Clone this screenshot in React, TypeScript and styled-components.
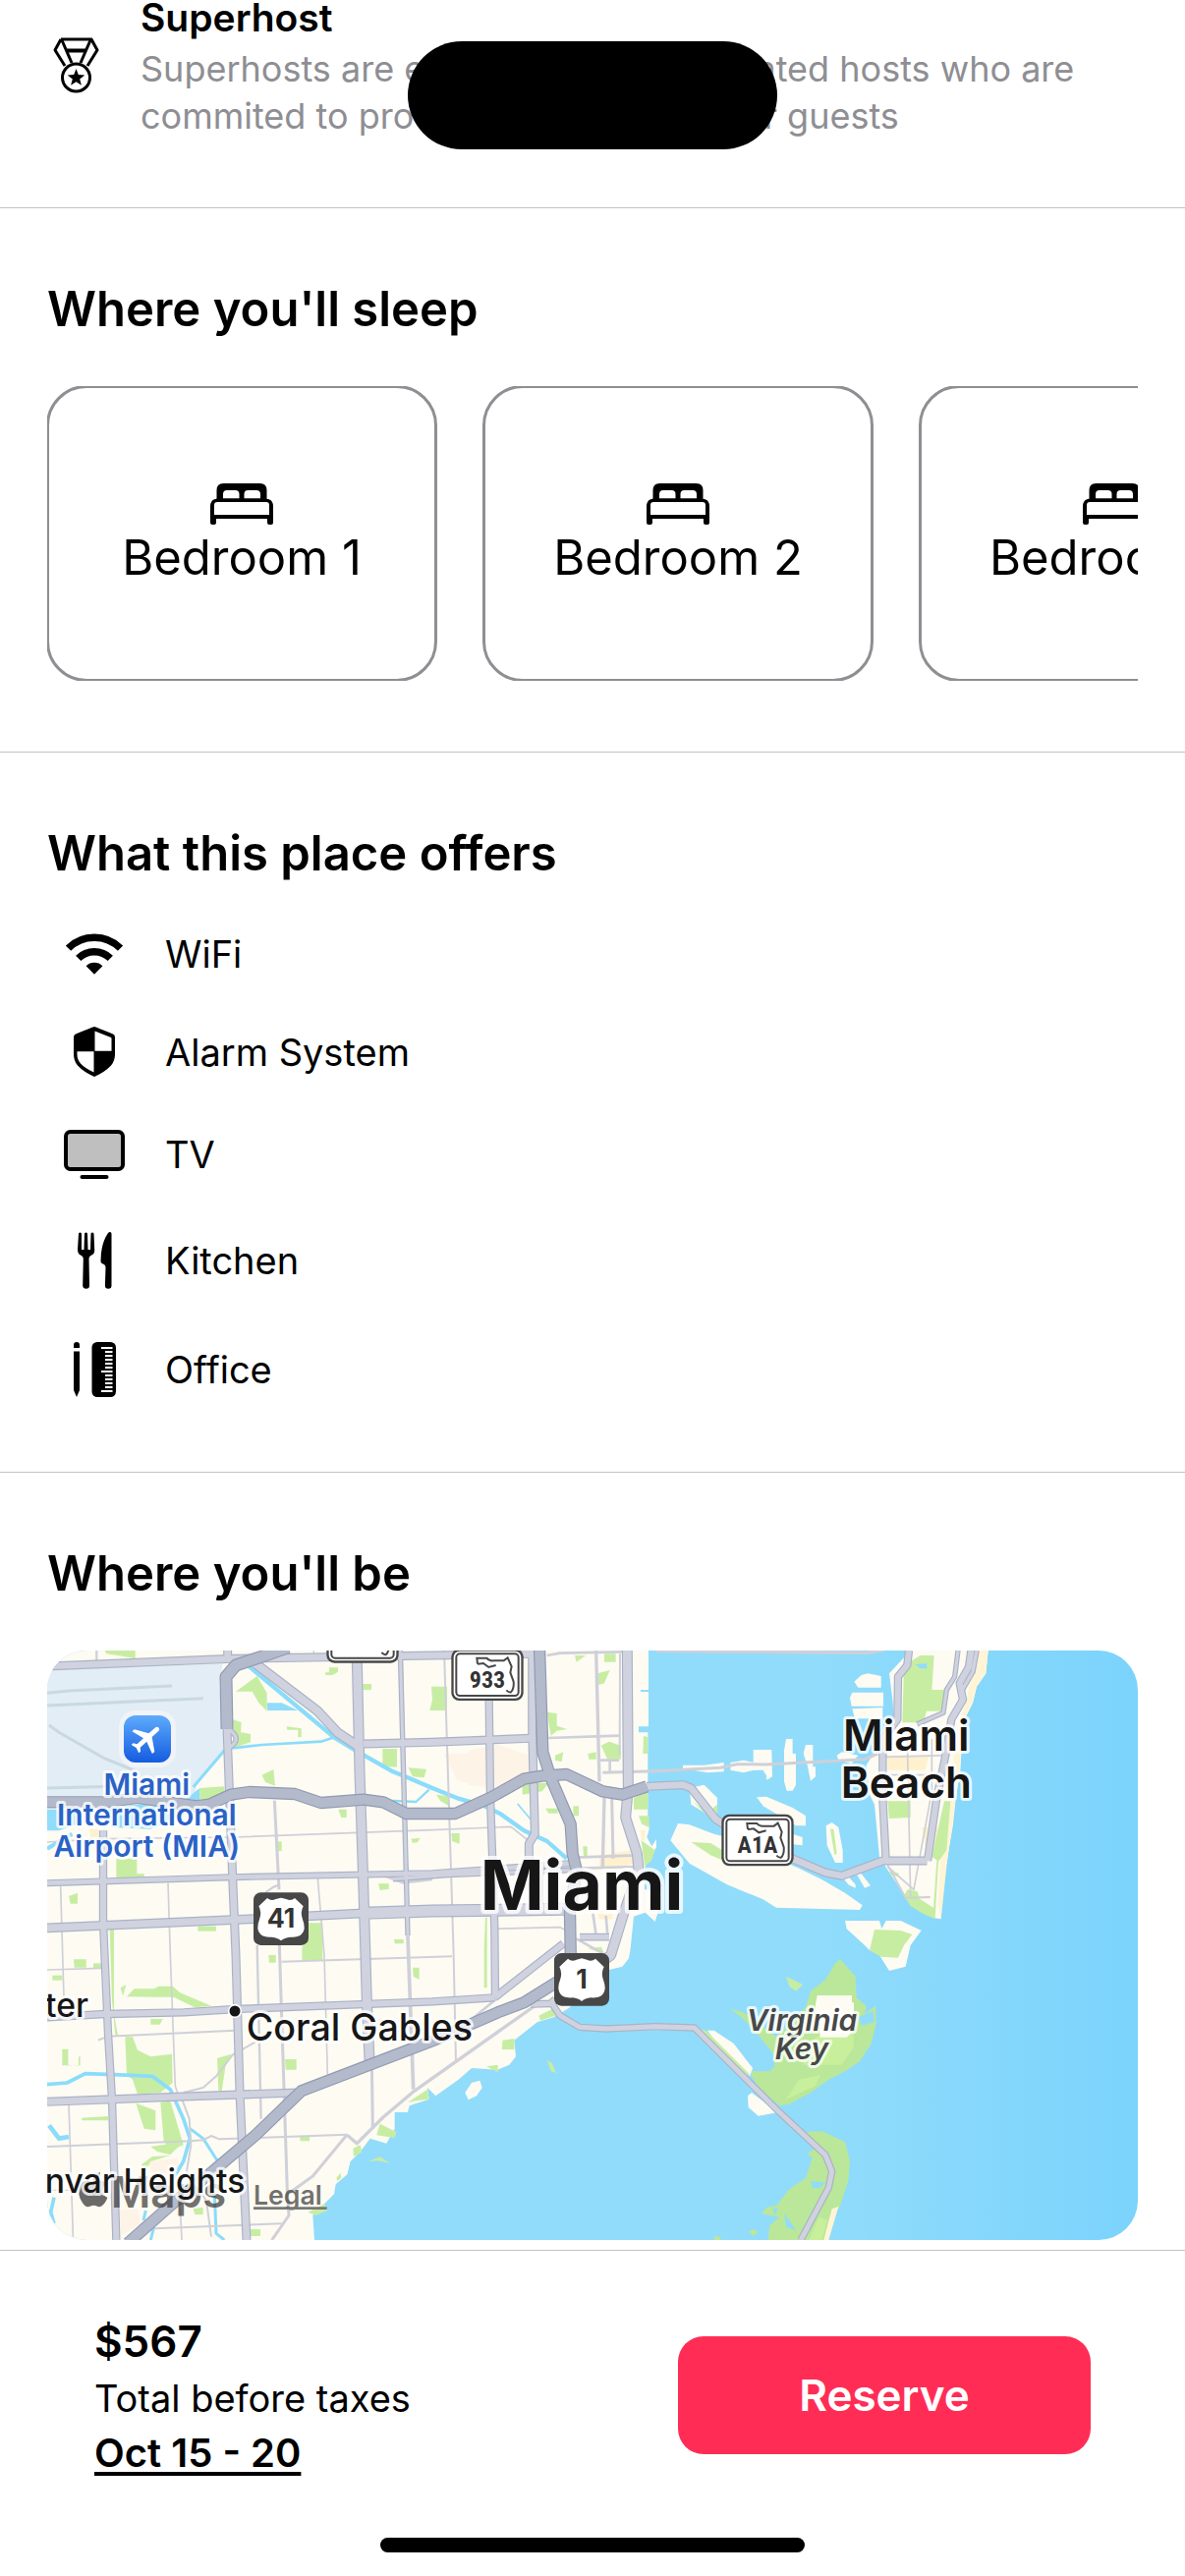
import React from "react";
import styled, { createGlobalStyle } from "styled-components";
import { FaApple } from "react-icons/fa";
import { MdFlight } from "react-icons/md";

const sans = `Inter, Roboto, "Liberation Sans", sans-serif`;
const narrow = `"Liberation Sans Narrow", "Roboto Condensed", Roboto, sans-serif`;

const GlobalStyle = createGlobalStyle`
  *, *::before, *::after { box-sizing: border-box; }
  body { margin: 0; background: #fff; color: #000; font-family: ${sans}; }
  h2, h3, p, ul { margin: 0; padding: 0; }
  ul { list-style: none; }
  svg { display: block; flex: none; }
`;

const Page = styled.div`
  display: flex;
  flex-direction: column;
  min-height: 100vh;
`;

const DynamicIsland = styled.div`
  position: fixed;
  top: 42px;
  left: 50%;
  width: 376px;
  height: 110px;
  margin-left: -188px;
  border-radius: 56px;
  background: #000;
`;

const Highlight = styled.section`
  display: flex;
  align-items: flex-start;
  gap: 42px;
  padding: 0 54px 69px;
`;

const HighlightIcon = styled.div`
  padding-top: 38px;
`;

const HighlightTitle = styled.h3`
  font-size: 39px;
  line-height: 36px;
  font-weight: 600;
  margin-bottom: 10px;
`;

const HighlightText = styled.p`
  font-size: 36px;
  line-height: 48px;
  color: #8e8e93;
`;

const Section = styled.section<{ $bottom: number }>`
  display: flex;
  flex-direction: column;
  gap: 48px;
  padding: 73px 48px ${(p) => p.$bottom}px;
  border-top: 1px solid #c2c2c4;
`;

const SectionTitle = styled.h2`
  font-size: 49px;
  line-height: 60px;
  font-weight: 600;
`;

const RoomScroller = styled.ul`
  display: flex;
  gap: 48px;
  overflow: hidden;
`;

const RoomCard = styled.li`
  flex: none;
  display: flex;
  flex-direction: column;
  align-items: center;
  justify-content: center;
  width: 396px;
  height: 300px;
  border-radius: 40px;
  outline: 3px solid #8e8e93;
  outline-offset: -2px;
  font-size: 49px;
  line-height: 60px;
  padding-top: 4px;
`;

const RoomIcon = styled.div`
  margin-bottom: 4px;
`;

const AmenityList = styled.ul`
  display: flex;
  flex-direction: column;
  gap: 48px;
`;

const Amenity = styled.li<{ $height: number }>`
  display: flex;
  align-items: center;
  height: ${(p) => p.$height}px;
  gap: 24px;
  font-size: 38px;
`;

const AmenityIcon = styled.div`
  display: flex;
  justify-content: center;
  width: 96px;
`;

const MapFrame = styled.div`
  height: 600px;
  border-radius: 40px;
  overflow: hidden;
`;

const BookingBar = styled.footer`
  display: flex;
  align-items: center;
  justify-content: space-between;
  padding: 61px 96px 59px;
  border-top: 1px solid #c2c2c4;
`;

const Price = styled.p`
  font-size: 44px;
  line-height: 62px;
  font-weight: 600;
`;

const PriceNote = styled.p`
  font-size: 38px;
  line-height: 55px;
`;

const Dates = styled.a`
  display: block;
  width: fit-content;
  font-size: 40px;
  line-height: 55px;
  font-weight: 600;
  color: inherit;
  text-decoration: underline;
  text-decoration-thickness: 4px;
  text-underline-offset: 5px;
  text-decoration-skip-ink: none;
`;

const ReserveButton = styled.button`
  width: 420px;
  height: 120px;
  border: 0;
  border-radius: 26px;
  background: #ff2d55;
  color: #fff;
  font: 600 44px ${sans};
`;

const HomeIndicator = styled.div`
  width: 432px;
  height: 15px;
  margin: 0 auto 24px;
  border-radius: 8px;
  background: #000;
`;

/* ---------- icons ---------- */

const MedalIcon = () => (
  <svg width="47" height="57" viewBox="0 0 47 57" fill="none" stroke="#000" strokeWidth="3" strokeLinejoin="round">
    <path d="M8 2H39L45 13L35 29M8 2L2 13L12 29" />
    <path d="M9 3L19 26M38 3L28 26" />
    <path d="M13.500 13.500H33.500" strokeWidth="4" />
    <circle cx="23.500" cy="41" r="14" />
    <path d="M23.500 32l2.300 6.100 6.500.3-5.100 4.100 1.700 6.300-5.400-3.600-5.400 3.600 1.700-6.300-5.100-4.100 6.500-.3z" fill="#000" stroke="none" />
  </svg>
);

const BedIcon = () => (
  <svg width="64" height="42" viewBox="0 0 64 42">
    <path d="M6.500 18V7q0-7 7-7h37q7 0 7 7v11z" />
    <path d="M13 15.500V11q0-4 4-4h8.500q4 0 4 4v4.500zM34.500 15.500V11q0-4 4-4H47q4 0 4 4v4.500z" fill="#fff" />
    <path d="M8 15.500h48q8 0 8 8V40q0 2-2 2h-2q-2 0-2-2v-4H6v4q0 2-2 2H2q-2 0-2-2V23.500q0-8 8-8z" />
    <path d="M7 19h50q3 0 3 3v10H4V22q0-3 3-3z" fill="#fff" />
  </svg>
);

const WifiIcon = () => (
  <svg width="58" height="42" viewBox="0 0 58 42" fill="none" stroke="#000" strokeWidth="7.500">
    <path d="M2.500 15.200A37.700 37.700 0 0 1 55.500 15.200" />
    <path d="M12.700 25.400A23.300 23.300 0 0 1 45.300 25.400" />
    <path d="M29 41.700L20.600 33.300A12 12 0 0 1 37.400 33.300z" fill="#000" stroke="none" />
  </svg>
);

const ShieldIcon = () => (
  <svg width="42" height="51" viewBox="0 0 42 51">
    <path d="M21 0Q22 0 40 7.500q2 1 2 3V28q0 7-4 11.500Q32 46 21 51 10 46 4 39.500 0 35 0 28V10.500q0-2 2-3Q20 0 21 0z" />
    <path d="M21.500 4.500L38 11q.5.300.5 1V24.800H21.500zM20.500 25.200V46.500Q11 42 7 37.500 3.500 33.500 3.500 28v-2.800z" fill="#fff" />
  </svg>
);

const TvIcon = () => (
  <svg width="62" height="50" viewBox="0 0 62 50">
    <rect x="2" y="2" width="58" height="38" rx="4.500" fill="#bfbfbf" stroke="#000" strokeWidth="4" />
    <rect x="16.500" y="46" width="29" height="4" rx="2" />
  </svg>
);

const UtensilsIcon = () => (
  <svg width="35" height="58" viewBox="0 0 35 58">
    <path d="M1 1.500Q2.500-.5 4 1.500V18h2.500L7 1.500Q8.500-.5 10 1.500L10.500 18H13l.500-16.500Q15-.5 16.500 1.500L17.200 18q.300 4-3 5.600Q11.500 25 11.500 27L12 54.500q0 3.300-3.300 3.300T5.200 54.500L5.800 27q0-2-2.800-3.400Q0 22 0 18z" />
    <path d="M33 0q1.500 0 1.500 2v52.500q0 3.300-3.300 3.300t-3.300-3.300L28.500 36q0-2.500-2-3.200Q23.500 32 23.500 29.500 23.500 12 31 1q1-1 2-1z" />
  </svg>
);

const RulerIcon = () => {
  const ticks = Array.from({ length: 12 }, (_, i) => i);
  return (
    <svg width="43" height="56" viewBox="0 0 43 56">
      <path d="M0 3q0-3 3-3t3 3v3H0zM0 9.500h6V49l-3 7-3-7z" />
      <rect x="18.500" y="0" width="24.500" height="56" rx="5.500" />
      <g fill="#fff">
        {ticks.map((i) => (
          <rect key={i} x={i === 0 || i === 6 || i === 11 ? 28 : 32} y={5 + i * 4} width={i === 0 || i === 6 || i === 11 ? 11.5 : 7.5} height="2" />
        ))}
      </g>
    </svg>
  );
};

/* ---------- map ---------- */

type Road = [string, number];

const islands = [
  "M2660 30L2595 100 2605 180 2610 240 2560 290 2550 340 2525 380 2535 470 2550 500 2565 660 2590 700 2650 790 2670 812 2740 848 2753 850 2755 770 2768 690 2790 560 2798 480 2812 400 2820 250 2850 190 2862 140 2890 100 2897 30z",
  "M2488 125L2510 105 2530 100 2570 108V143H2500z",
  "M2475 175L2482 158H2577V200H2480z",
  "M2482 208L2575 204V238H2490z",
  "M2280 300H2300V345H2310V440L2300 458H2282L2274 430V335z",
  "M2340 318H2362V385H2370V415L2355 428 2345 380 2333 345z",
  "M2180 333H2236L2238 415 2220 425V395H2180z",
  "M2212 335H2235V400L2228 423 2212 400z",
  "M1965 380H2030L2090 372V400L2040 403 1965 390z",
  "M2110 372L2150 365 2195 375V392L2150 403 2110 395z",
  "M2435 350L2450 340 2500 350 2480 375 2440 365z",
  "M1985 450L2030 440 2070 480V535L2040 530 1990 500z",
  "M2190 478L2220 476 2300 510 2340 535V565H2310L2210 505z",
  "M2300 590L2330 600V625L2300 622z",
  "M2402 565L2420 555 2440 570 2453 640V678H2430L2405 625z",
  "M1927 610L1950 558 1985 562 2060 590 2100 600 2320 695 2390 730 2460 770 2513 808 2505 822 2420 820 2250 815 2210 790 2100 745 1985 680z",
  "M2455 725L2470 720 2492 745V755L2470 745z",
  "M2495 712L2510 712 2538 748 2520 755z",
  "M2460 855H2565L2572 880 2585 855H2630L2693 885 2660 930 2645 995 2595 1008 2565 960 2535 945 2520 930 2465 880z",
  "M2040 1190L2060 1190 2120 1230 2178 1305 2170 1330 2090 1260z",
  "M2175 1380L2255 1440 2220 1447 2195 1451 2165 1425 2163 1390z",
  "M1300 1380L1320 1350 1345 1343 1352 1365 1335 1390 1310 1402z",
];

const parks = [
  "M200 30H293V55L240 45 205 40z", "M600 155L665 108 695 160V215L670 190 650 155z", "M590 240L617 250 615 280 645 285V310L600 325z",
  "M755 262L800 268V295H790V272H757z", "M680 410L715 393 720 443 690 432z", "M885 82H912V95L895 105H873V97H885z",
  "M988 132H1014V150H988z", "M1048 330H1092V385H1048z", "M1127 388L1182 392 1175 418 1140 415z",
  "M490 450L565 445V478L530 495H490z", "M235 665H298V712H320V723H235z", "M90 780L117 770V803H95z",
  "M728 613H740V642H728z", "M913 515H938V540H922z", "M1035 742H1067V758L1040 762z", "M820 862H865V975H802V940z",
  "M484 872H540V887H484z", "M215 880H228V1140L240 1205H232L222 1100z", "M1135 605L1163 602 1155 615 1140 618z",
  "M1197 140H1245V213H1192L1200 180z", "M1550 218L1580 222V260L1612 270 1580 275 1562 290z", "M1635 45H1668L1640 65z",
  "M1705 100L1742 90 1725 130 1708 135z", "M1725 40H1760V65H1725z", "M1715 320L1740 308 1775 320V362H1735z",
  "M1845 290L1857 295V345H1843z", "M1575 350L1600 340 1595 370 1575 365z", "M1675 345L1700 340V362H1678z",
  "M1212 470L1250 475 1255 507 1225 490z", "M1080 330L1092 335 1090 385H1080z",
  "M1475 435L1555 435 1535 460 1475 470z", "M1545 512L1583 512V527H1555z", "M1630 505L1647 505V535H1630z",
  "M1815 480L1858 455V515H1815z", "M1830 535H1862V570L1840 560z", "M1838 610L1880 640 1870 670 1848 690z",
  "M1660 628H1673V660H1662z", "M1258 588H1283V620L1260 612z", "M1362 845H1367V1060H1358V940z",
  "M105 973H143V998H107z", "M165 985H190V1000H165z", "M267 1087L290 1063H350L365 1055H407L430 1075 525 1115 475 1120 410 1088H350z",
  "M248 1060L265 1050 255 1085z", "M340 1155H377L368 1172H340z", "M40 1022H70V1037H40z", "M262 1210H285L300 1250 340 1270 405 1262 407 1350 370 1380 300 1385 285 1340 267 1325z",
  "M70 1247H88V1295L120 1298V1270H125V1297H70z", "M543 1275L587 1262 570 1290 557 1375H547z", "M700 960H722V983H702z",
  "M750 1278H785V1310H752z", "M295 1412L355 1435V1495L320 1490z", "M370 1410L400 1405 412 1445 440 1540 405 1555 380 1530z",
  "M130 1457L210 1452V1465H130z", "M340 1545L440 1530 400 1570 360 1560z", "M312 1600L345 1575 400 1572 340 1590 320 1625z",
  "M640 1797H675V1818H642z", "M795 1512H825V1528H797z", "M470 1735L500 1730V1752H475z", "M1140 998H1160V1035L1142 1025z",
  "M1083 912H1112V925H1085z", "M958 1550L980 1540 985 1562 960 1575z", "M1040 1475L1090 1500 1085 1518 1030 1510z",
  "M1125 1410L1185 1370 1190 1400 1150 1405z", "M1525 1145L1575 1120V1145L1530 1160z", "M1415 1220L1450 1215V1248H1412z",
  "M1365 1300L1400 1295 1400 1318z", "M1550 1280L1565 1290 1578 1320 1562 1315z", "M1675 940L1715 935 1725 955z", "M1005 1590L1040 1576 1070 1595 1035 1588z",
  "M907 1640L920 1625 922 1640 910 1650z", "M820 1745L870 1720 880 1740 845 1755z",
  "M2640 75L2690 45H2732L2725 150 2700 250H2635z", "M2710 150H2775L2765 215H2700z", "M2590 490H2660V540L2595 543z",
  "M2763 490H2782L2770 640 2745 675 2735 850 2700 835 2660 810 2640 780 2650 760 2680 765 2690 790 2730 815 2740 670 2725 660z",
  "M1995 490L2040 525 2070 500 2070 540 2030 525z", "M1990 615L2050 618 2085 640V670L2050 655z", "M2415 575L2425 575 2435 650 2428 655z",
  "M2550 882L2630 885 2665 897 2640 930 2622 968 2570 965 2535 945z", "M2595 705L2625 710 2620 720 2597 715z",
  "M2010 1185L2035 1190 2170 1325 2150 1330z",
  "M2280 1025L2332 1050 2310 1070 2290 1055z",
];

const keys = [
  "M2445 972L2492 1025 2495 1090 2525 1115 2520 1140 2553 1115 2555 1170 2540 1230 2505 1285 2460 1315 2410 1340 2355 1380 2290 1415 2260 1420 2200 1370 2175 1330V1315H2230L2245 1300 2240 1260 2200 1210 2150 1155 2110 1125 2150 1135 2200 1170 2250 1210 2290 1170 2340 1120 2355 1070 2400 1035 2430 985z",
  "M2335 1500L2390 1498 2460 1530 2475 1590 2470 1650 2445 1725 2425 1760 2410 1830H2225L2230 1785 2260 1760 2205 1750 2220 1730 2250 1725 2290 1675 2340 1640 2360 1580 2345 1565 2370 1550z",
  "M2165 1805L2180 1797 2195 1805 2180 1818z", "M2060 1818L2080 1820V1830H2060z",
];

const canals: Road[] = [
  ["M640 78L900 295 965 335 1080 400 1130 420 1200 450 1280 482 1360 505 1410 530 1480 580 1550 612 1610 665", 13],
  ["M590 328L680 318 860 308 910 292", 8], ["M565 335L510 400 470 447", 9], ["M1060 488L1150 492 1190 455", 7],
  ["M24 1355L85 1350 140 1322 230 1325 345 1330 400 1370 440 1460 460 1520 440 1590 410 1640", 11],
  ["M460 1490L500 1520 545 1590", 9], ["M535 1690L540 1810 565 1830", 9], ["M325 1740L318 1770M350 1790L340 1830", 9],
  ["M45 1700L35 1745 45 1780", 11], ["M30 1480L60 1520 90 1515", 14], ["M1460 498L1500 545", 5], ["M24 635L100 590", 12],
];

const minorRoads: Road[] = [
  ["M175 30V75", 7], ["M718 488L732 760", 9], ["M733 930L757 1680 762 1755 710 1830", 9], ["M850 725L870 960 880 1325", 5],
  ["M1105 60L1125 900 1142 1370", 11], ["M65 750L75 1090", 5], ["M393 740L400 960 415 1360 425 1390", 5], ["M665 930L677 1460", 7],
  ["M90 1415L103 1820", 5], ["M838 30V45", 4], ["M1236 30L1265 960 1272 1290", 6], ["M1700 30L1710 430", 10],
  ["M1773 40L1772 350", 6], ["M1725 480L1720 690", 10], ["M1748 480L1752 665", 9], ["M1550 45L1590 38 1780 34", 8], ["M1555 297L1770 290", 8],
  ["M1705 365H1770M1742 365V400", 8], ["M24 615L200 605 590 600 1200 578 1440 568 1495 612", 5], ["M24 1005L190 1000", 5],
  ["M740 980L1260 964", 6], ["M24 1545L460 1528 500 1525 525 1512 550 1522 940 1508", 6], ["M180 1220L210 1208 600 1190", 6],
  ["M440 1380L500 1365 540 1330 590 1265 660 1225", 6], ["M432 1390L458 1460 463 1540 450 1620 510 1710 525 1820", 6],
  ["M350 1795L740 1780", 6], ["M430 1730L435 1830", 5], ["M940 1508L835 1635 765 1685", 9],
  ["M940 1510L970 1535 1050 1455 1145 1375 1520 1110", 10], ["M1015 1280L1018 1490", 9], ["M1380 880L1590 875 1620 890", 5],
  ["M1640 910L1720 955M1690 830L1700 900M1730 840L1735 900", 8], ["M1635 662L1830 655M1650 695L1820 690", 8], ["M690 770L715 752 735 745", 7],
  ["M1050 715L1110 738 1200 728", 10], ["M2650 300L2660 780", 5], ["M2725 300L2725 460 2670 760 2590 690", 5], ["M2590 685L2645 785 2720 783", 6],
  ["M2575 355L2780 350M2590 410H2760", 5], ["M24 1678H120", 4], ["M1310 1165L1400 1090", 8],
  ["M1720 403L1880 398 2080 388 2130 377 2220 378 2520 362 2560 345", 9], ["M1885 31L2530 37 2580 28", 10],
];

const arterials: Road[] = [
  ["M24 78L590 55 1200 45 1505 40", 20], ["M24 740L590 722 1200 710 1620 680", 14], ["M1080 728L1250 715 1640 700", 10],
  ["M24 877L640 850 990 832", 22], ["M990 832L1200 825 1610 820", 32], ["M990 315L1200 310 1500 298", 20],
  ["M24 1150L200 1140 440 1135 600 1125 1200 1102 1390 1090", 18], ["M1390 1090L1600 925", 18], ["M24 1408L440 1392 790 1380", 20],
  ["M575 25V60M573 268L590 720 600 960 612 1380 633 1830", 20], ["M580 272Q620 300 582 325", 10], ["M195 580V860L210 1200 222 1400 235 1830", 18],
  ["M970 60L978 400 988 700 1000 1100 1008 1280", 26], ["M1505 30L1505 270 1513 590 1495 620V670L1525 700V820", 20],
  ["M1373 180L1377 480 1383 650 1390 880 1392 1090", 18], ["M1102 30L1125 900", 9],
  ["M660 70L850 215 910 280 970 320", 24], ["M1795 30L1798 450 1790 540 1825 650 1830 700 1785 830 1745 960 1725 975", 26],
  ["M1650 905H1740", 16], ["M1500 1110L1560 1108 1575 1095", 16],
  ["M1855 445L1965 440 1990 450 2065 545 2105 570 2305 668 2400 708 2450 718 2575 672 2710 672", 20],
  ["M2655 30L2650 75 2622 110 2620 240 2575 300 2575 480 2585 672", 18], ["M2805 30L2795 110 2770 150 2760 220 2680 255", 9],
  ["M2845 30L2838 80 2810 130 2820 180 2785 240 2765 360 2740 480 2712 672", 18], ["M2862 30L2850 95 2818 150", 10],
  ["M1560 1100L1590 1145 1650 1180 1730 1185 1880 1178 2000 1182 2260 1440 2400 1570 2420 1620 2410 1670 2325 1830", 15],
];

const highways: Road[] = [
  ["M24 493H200L300 480 480 505 520 500 585 470 640 462 780 468 860 495 990 485 1050 493 1120 528H1270L1380 478 1480 422 1535 413 1610 408 1720 460 1780 470 1855 445", 30],
  ["M760 20L690 45 600 75 570 110 573 270", 32],
  ["M1527 20L1537 340 1562 420 1622 560 1628 650 1640 700 1620 830 1623 1000", 30],
  ["M1600 1030L1480 1105 1400 1135 1200 1222 800 1375 660 1510 530 1620 400 1725 270 1840", 30],
];

const RoadLayer = ({ roads, casing, fill }: { roads: Road[]; casing?: string; fill: string }) => (
  <g fill="none" strokeLinejoin="round">
    {casing && roads.map(([d, w]) => <path key={d} d={d} stroke={casing} strokeWidth={w + 7} />)}
    {roads.map(([d, w]) => <path key={d + w} d={d} stroke={fill} strokeWidth={w} />)}
  </g>
);

const MapText = styled.text<{ $size: number; $weight?: number; $color?: string; $halo?: number; $italic?: boolean }>`
  font-family: ${sans};
  font-size: ${(p) => p.$size}px;
  font-weight: ${(p) => p.$weight ?? 500};
  font-style: ${(p) => (p.$italic ? "italic" : "normal")};
  fill: ${(p) => p.$color ?? "#161616"};
  stroke: rgba(255, 255, 255, 0.8);
  stroke-width: ${(p) => p.$halo ?? 18}px;
  stroke-linejoin: round;
  paint-order: stroke;
`;

const RouteText = styled.text<{ $family: string; $size: number }>`
  font-family: ${(p) => p.$family};
  font-size: ${(p) => p.$size}px;
  font-weight: 700;
  fill: #333;
  text-anchor: middle;
`;

const Attribution = styled.text<{ $size: number }>`
  font-family: ${sans};
  font-size: ${(p) => p.$size}px;
  font-weight: 600;
  fill: #333;
  fill-opacity: 0.7;
`;

const UsRoute = ({ x, y, label }: { x: number; y: number; label: string }) => (
  <g transform={`translate(${x} ${y})`}>
    <rect width="168" height="161" rx="22" fill="#474747" />
    <path d="M42 17Q54 28 68 20L84 16 100 20Q114 28 126 17L152 42Q142 60 150 82 162 112 146 128 134 138 112 136 94 138 84 147 74 138 56 136 34 138 22 128 6 112 18 82 26 60 16 42z" fill="#fff" />
    <RouteText x="84" y="108" $family={sans} $size={80}>{label}</RouteText>
  </g>
);

const FloridaRoute = ({ x, y, label }: { x: number; y: number; label?: string }) => (
  <g transform={`translate(${x} ${y})`}>
    <rect width="220" height="158" rx="24" fill="#474747" />
    <rect x="7" y="7" width="206" height="144" rx="18" fill="#fff" />
    <rect x="15" y="15" width="190" height="128" rx="11" fill="#fff" stroke="#474747" strokeWidth="6" />
    <path d="M80 46L78 28H108Q116 38 130 36L160 36 172 27 184 54 180 72 190 100Q192 122 182 132 176 134 168 126M80 46L98 44 114 56 136 50" fill="none" stroke="#474747" strokeWidth="6" />
    {label && <RouteText x="110" y="119" $family={narrow} $size={72}>{label}</RouteText>}
  </g>
);

const MiamiMap = () => (
  <svg width="100%" height="100%" viewBox="24 30 3330 1800" preserveAspectRatio="xMidYMid slice" role="img" aria-label="Map of Miami">
    <defs>
      <linearGradient id="sea" x1="0" x2="1" y1="0" y2="0">
        <stop offset="0.7" stopColor="#91dcfb" />
        <stop offset="1" stopColor="#7bd3fc" />
      </linearGradient>
      <linearGradient id="pin" x1="0" x2="0" y1="0" y2="1">
        <stop offset="0" stopColor="#5eabfc" />
        <stop offset="1" stopColor="#155ce0" />
      </linearGradient>
    </defs>
    <rect x="24" y="30" width="3330" height="1800" fill="url(#sea)" />
    <path
      fill="#fdfbf2"
      d="M0 0H1860V150H1836V156H1860V262H1830V280H1858V540L1862 575 1855 600 1870 628 1884 606V630L1850 690 1848 760 1900 765 1892 820 1880 858 1850 830 1815 842 1805 940 1800 970 1780 995 1740 1005 1720 1040 1640 1080 1620 1120 1570 1150 1520 1165 1450 1220 1455 1270 1435 1295 1400 1310 1320 1305 1280 1340 1210 1390 1185 1365 1190 1400 1130 1420 1125 1440H1085V1490L1060 1535 1010 1520 980 1560 950 1590 940 1630 905 1660 900 1690 870 1720 835 1755 840 1830H0z"
    />
    <g fill="#fdfbf2">{islands.map((d) => <path key={d} d={d} />)}</g>
    <path d="M2865 30H2897L2890 100 2862 140 2850 190 2820 250 2808 420 2798 480 2770 690 2753 850 2745 800 2750 680 2780 480 2800 280 2830 180z" fill="#fff5d6" />
    <path d="M24 90L560 70 550 130 560 270 565 340 480 440 470 500 24 480z" fill="#e2edf5" />
    <path d="M24 160L90 153 405 138M24 198L300 185 500 176M30 258L60 280 200 360 300 400M24 450L230 445" fill="none" stroke="#c9d8e1" strokeWidth="9" />
    <path d="M24 515H115V560L60 580 24 580zM210 510L300 500 440 490 490 450V495L390 555 340 575 220 570z" fill="#91dcfb" />
    <path d="M695 190L740 190 790 213H697z" fill="#91dcfb" />
    <path d="M1312 335L1400 318 1498 350V435L1400 450 1310 440zM1235 345H1312V435L1275 425zM330 1590L420 1580 430 1610 350 1640zM245 1740L300 1735 310 1780 250 1815z" fill="#fdf3e6" />
    <path d="M1710 655L1810 640 1815 680 1780 690H1710zM1835 578H1850L1848 610 1840 610zM2590 355H2715L2705 395H2590zM2695 570H2745L2730 640 2710 655zM1705 835H1750V850H1710zM155 575H180V600H155z" fill="#fff1cd" />
    <g fill="#c7eda3">{parks.map((d) => <path key={d} d={d} />)}</g>
    <g fill="#bae799">{keys.map((d) => <path key={d} d={d} />)}</g>
    <path d="M2370 1210L2485 1190 2487 1240 2450 1295H2330zM2280 1400L2320 1340 2385 1325 2370 1360zM2380 1760L2405 1770 2390 1830H2350z" fill="#c8f09c" />
    <path d="M2375 1083H2481V1105H2487V1190L2465 1211H2383V1170H2370V1110z" fill="#fdfbf2" />
    <path d="M2420 1735L2440 1728 2410 1830H2395z" fill="#fff5d6" />
    <path d="M2357 1650L2400 1655 2380 1672 2360 1670zM2275 1750L2310 1800 2280 1790zM2240 1730L2255 1735 2245 1755zM2675 72L2710 70V85L2690 85zM2500 1150L2545 1130 2550 1165 2510 1175z" fill="#91dcfb" />
    <RoadLayer roads={canals} fill="#8adcfb" />
    <RoadLayer roads={minorRoads} fill="#cfd0d8" />
    <RoadLayer roads={arterials} casing="#a9b3c6" fill="#d0d2df" />
    <RoadLayer roads={highways} casing="#919ab2" fill="#b2bacb" />

    <FloridaRoute x={877} y={-90} />
    <FloridaRoute x={1258} y={25} label="933" />
    <FloridaRoute x={2083} y={530} label="A1A" />
    <UsRoute x={654} y={769} label="41" />
    <UsRoute x={1572} y={954} label="1" />

    <rect x="243" y="213" width="174" height="174" rx="50" fill="#f0f3f7" />
    <rect x="258" y="228" width="144" height="144" rx="36" fill="url(#pin)" />
    <g transform="rotate(48 330 300)">
      <MdFlight x="272" y="242" size={116} color="#fff" />
    </g>
    <g textAnchor="middle">
      <MapText x="328" y="471" $size={90} $weight={600} $color="#2a62c6">Miami</MapText>
      <MapText x="328" y="565" $size={90} $weight={600} $color="#2a62c6">International</MapText>
      <MapText x="328" y="659" $size={90} $weight={600} $color="#2a62c6">Airport (MIA)</MapText>
      <MapText x="1656" y="823" $size={209} $weight={700} $halo={24}>Miami</MapText>
      <MapText x="2647" y="335" $size={132} $weight={600}>Miami</MapText>
      <MapText x="2647" y="479" $size={132} $weight={600}>Beach</MapText>
      <MapText x="2328" y="1190" $size={90} $weight={600} $color="#484848" $italic>Virginia</MapText>
      <MapText x="2328" y="1279" $size={90} $weight={600} $color="#484848" $italic>Key</MapText>
    </g>
    <circle cx="597" cy="1131" r="19" fill="#161616" stroke="#fff" strokeWidth="5" />
    <MapText x="632" y="1222" $size={113}>Coral Gables</MapText>
    <MapText x="150" y="1149" $size={101} textAnchor="end">ter</MapText>
    <FaApple x="104" y="1616" size={120} color="rgba(50,50,50,0.72)" />
    <Attribution x="218" y="1732" $size={132}>Maps</Attribution>
    <MapText x="628" y="1687" $size={101} textAnchor="end">nvar Heights</MapText>
    <a href="#legal">
      <Attribution x="654" y="1722" $size={80}>Legal</Attribution>
      <path d="M654 1733H878" stroke="#777" strokeWidth="8" />
    </a>
  </svg>
);

/* ---------- page ---------- */

const amenities = [
  { label: "WiFi", icon: <WifiIcon />, height: 48 },
  { label: "Alarm System", icon: <ShieldIcon />, height: 55 },
  { label: "TV", icon: <TvIcon />, height: 57 },
  { label: "Kitchen", icon: <UtensilsIcon />, height: 63 },
  { label: "Office", icon: <RulerIcon />, height: 64 },
];

export default function App() {
  return (
    <Page>
      <GlobalStyle />
      <main>
        <Highlight>
          <HighlightIcon><MedalIcon /></HighlightIcon>
          <div>
            <HighlightTitle>Superhost</HighlightTitle>
            <HighlightText>
              Superhosts are experienced, highly rated hosts who are
              <br />
              commited to providing a great stay for guests
            </HighlightText>
          </div>
        </Highlight>

        <Section $bottom={72}>
          <SectionTitle>Where you'll sleep</SectionTitle>
          <RoomScroller>
            {[1, 2, 3].map((n) => (
              <RoomCard key={n}>
                <RoomIcon><BedIcon /></RoomIcon>
                Bedroom {n}
              </RoomCard>
            ))}
          </RoomScroller>
        </Section>

        <Section $bottom={72}>
          <SectionTitle>What this place offers</SectionTitle>
          <AmenityList>
            {amenities.map((a) => (
              <Amenity key={a.label} $height={a.height}>
                <AmenityIcon>{a.icon}</AmenityIcon>
                {a.label}
              </Amenity>
            ))}
          </AmenityList>
        </Section>

        <Section $bottom={10}>
          <SectionTitle>Where you'll be</SectionTitle>
          <MapFrame><MiamiMap /></MapFrame>
        </Section>
      </main>

      <BookingBar>
        <div>
          <Price>$567</Price>
          <PriceNote>Total before taxes</PriceNote>
          <Dates href="#dates">Oct 15 - 20</Dates>
        </div>
        <ReserveButton type="button">Reserve</ReserveButton>
      </BookingBar>
      <HomeIndicator />
      <DynamicIsland />
    </Page>
  );
}
